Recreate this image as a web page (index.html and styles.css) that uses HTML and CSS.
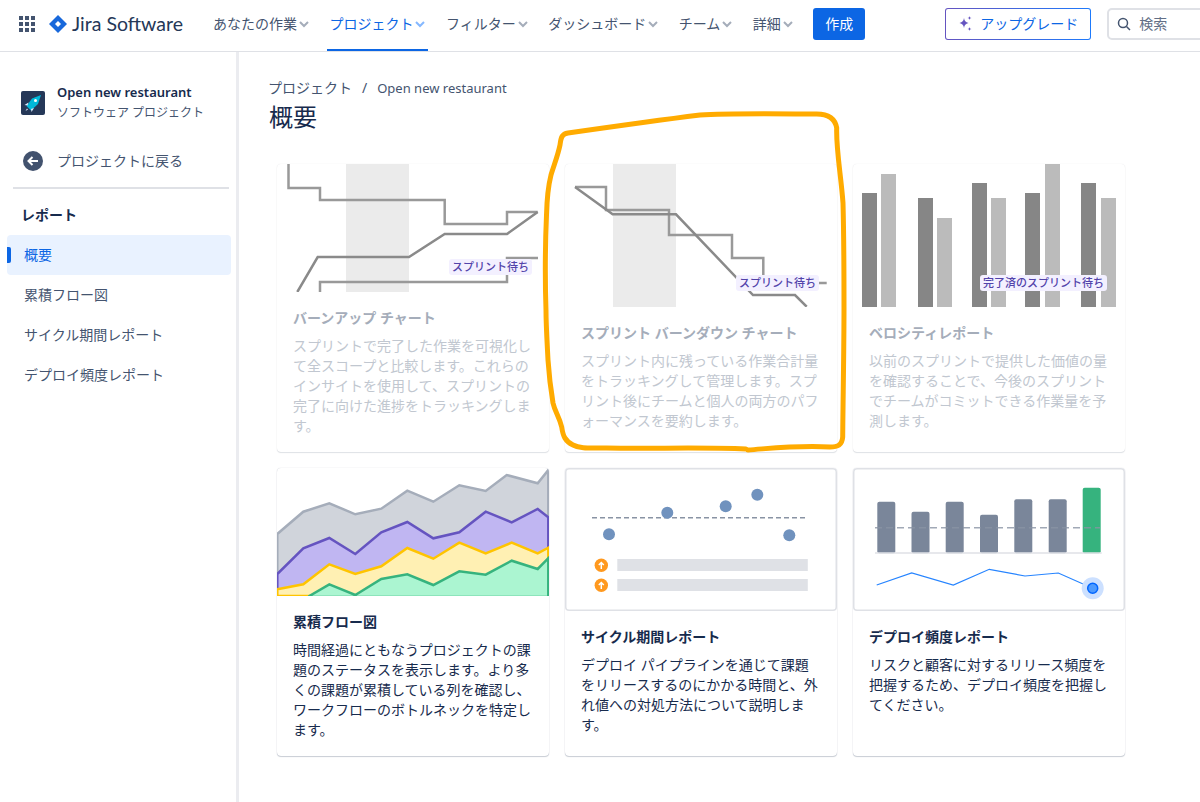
FILE: index.html
```html
<!DOCTYPE html>
<html lang="ja">
<head>
  <meta charset="UTF-8">
  <title>概要 - Jira Software</title>
  <link rel="stylesheet" href="styles.css">
</head>
<body>

  <header class="topbar">
    <svg class="apps" width="16" height="16" viewBox="0 0 16 16">
      <path d="M0 0h4v4H0zM6 0h4v4H6zM12 0h4v4h-4zM0 6h4v4H0zM6 6h4v4H6zM12 6h4v4h-4zM0 12h4v4H0zM6 12h4v4H6zM12 12h4v4h-4z"/>
    </svg>
    <div class="logo">
      <svg width="18" height="18" viewBox="0 0 18 18">
        <path d="M9 0l9 9-9 9-9-9z" fill="#1868db"/>
        <path d="M9 6l3 3-3 3-3-3z" fill="#fff"/>
      </svg>
      <span>Jira Software</span>
    </div>
    <nav class="nav">
      <a class="nav-item">あなたの作業<svg class="chev" viewBox="0 0 12 12"><path d="M2 4l4 4 4-4"/></svg></a>
      <a class="nav-item active">プロジェクト<svg class="chev" viewBox="0 0 12 12"><path d="M2 4l4 4 4-4"/></svg></a>
      <a class="nav-item">フィルター<svg class="chev" viewBox="0 0 12 12"><path d="M2 4l4 4 4-4"/></svg></a>
      <a class="nav-item">ダッシュボード<svg class="chev" viewBox="0 0 12 12"><path d="M2 4l4 4 4-4"/></svg></a>
      <a class="nav-item">チーム<svg class="chev" viewBox="0 0 12 12"><path d="M2 4l4 4 4-4"/></svg></a>
      <a class="nav-item">詳細<svg class="chev" viewBox="0 0 12 12"><path d="M2 4l4 4 4-4"/></svg></a>
    </nav>
    <button class="create">作成</button>
    <button class="upgrade">
      <svg width="16" height="16" viewBox="0 0 16 16" fill="#6554c0">
        <path d="M7 2c.5 3 1.5 4.300 4.500 5-3 .7-4 2-4.500 5-.5-3-1.500-4.300-4.500-5C5.500 6.300 6.500 5 7 2z"/>
        <path d="M12.500 0c.2 1.300.7 1.800 2 2-1.300.2-1.800.7-2 2-.2-1.300-.7-1.800-2-2 1.300-.2 1.800-.7 2-2zM12.500 11c.2 1.300.7 1.800 2 2-1.300.2-1.800.7-2 2-.2-1.300-.7-1.800-2-2 1.300-.2 1.800-.7 2-2z"/>
      </svg>
      アップグレード
    </button>
    <div class="search">
      <svg width="14" height="14" viewBox="0 0 14 14"><circle cx="6" cy="6" r="4.500"/><path d="M9.500 9.500L13 13"/></svg>
      <span>検索</span>
    </div>
  </header>

  <div class="layout">
    <aside class="sidebar">
      <div class="project">
        <svg class="project-icon" width="24" height="24" viewBox="0 0 24 24">
          <rect width="24" height="24" rx="2" fill="#253858"/>
          <path d="M20 4l-3 9-7 6.500-4.500-4.500L11 7.500z" fill="#00b8d9"/>
          <path d="M7.500 11.500L3.500 14l3 .5zM13 17l-2.500 4-.5-3z" fill="#deebff"/>
          <path d="M6 17.500l-1.500 2.500 2.500-1.500z" fill="#deebff"/>
          <circle cx="14.500" cy="9.500" r="1.500" fill="#fff"/>
        </svg>
        <div>
          <div class="project-name">Open new restaurant</div>
          <div class="project-type">ソフトウェア プロジェクト</div>
        </div>
      </div>
      <a class="back">
        <svg width="20" height="20" viewBox="0 0 20 20">
          <circle cx="10" cy="10" r="10" fill="#42526e"/>
          <path d="M15 10H6M9.500 6L5.500 10l4 4" fill="none" stroke="#fff" stroke-width="2"/>
        </svg>
        プロジェクトに戻る
      </a>
      <div class="side-divider"></div>
      <div class="side-heading">レポート</div>
      <a class="side-item selected">概要</a>
      <a class="side-item">累積フロー図</a>
      <a class="side-item">サイクル期間レポート</a>
      <a class="side-item">デプロイ頻度レポート</a>
    </aside>

    <main class="main">
      <div class="breadcrumb">
        <span>プロジェクト</span><span class="sep">/</span><span class="crumb-en">Open new restaurant</span>
      </div>
      <h1 class="title">概要</h1>

      <div class="cards">

        <section class="card faded">
          <div class="pic">
            <svg class="chart" width="272" height="128" viewBox="277 164 272 128" fill="none">
              <rect x="346" y="164" width="63" height="128" fill="#ebebeb"/>
              <path d="M288.500 164V188H320V200H444.700V224H507V212H537.700" stroke="#999" stroke-width="2.500"/>
              <path d="M537.700 212L507 234H444.700L409 257H317.700L297.300 292" stroke="#8a8a8a" stroke-width="2.500"/>
              <path d="M538 258H507V282H320V292" stroke="#999" stroke-width="2.500"/>
            </svg>
            <span class="badge badge-up">スプリント待ち</span>
          </div>
          <div class="body">
            <h2>バーンアップ チャート</h2>
            <p>スプリントで完了した作業を可視化して全スコープと比較します。これらのインサイトを使用して、スプリントの完了に向けた進捗をトラッキングします。</p>
          </div>
        </section>

        <section class="card faded">
          <div class="pic">
            <svg class="chart" width="272" height="143" viewBox="565 164 272 143" fill="none">
              <rect x="613" y="164" width="63" height="143" fill="#ebebeb"/>
              <path d="M575 187H606V210H669V235H732V258H763.300V283H826.700" stroke="#999" stroke-width="2.500"/>
              <path d="M575 187L612.700 214.300H676L753 295H795L806.700 306.700" stroke="#8a8a8a" stroke-width="2.500"/>
            </svg>
            <span class="badge badge-down">スプリント待ち</span>
          </div>
          <div class="body">
            <h2>スプリント バーンダウン チャート</h2>
            <p>スプリント内に残っている作業合計量をトラッキングして管理します。スプリント後にチームと個人の両方のパフォーマンスを要約します。</p>
          </div>
        </section>

        <section class="card faded">
          <div class="pic">
            <svg class="chart" width="272" height="143" viewBox="853 164 272 143">
              <g fill="#868686">
                <rect x="862" y="193" width="15" height="114"/>
                <rect x="918" y="198" width="15" height="109"/>
                <rect x="972" y="183" width="15" height="124"/>
                <rect x="1025" y="193" width="15" height="114"/>
                <rect x="1081" y="183" width="15" height="124"/>
              </g>
              <g fill="#bbb">
                <rect x="881" y="174" width="15" height="133"/>
                <rect x="937" y="218" width="15" height="89"/>
                <rect x="991" y="198" width="15" height="109"/>
                <rect x="1045" y="164" width="15" height="143"/>
                <rect x="1101" y="198" width="15" height="109"/>
              </g>
            </svg>
            <span class="badge badge-velocity">完了済のスプリント待ち</span>
          </div>
          <div class="body">
            <h2>ベロシティレポート</h2>
            <p>以前のスプリントで提供した価値の量を確認することで、今後のスプリントでチームがコミットできる作業量を予測します。</p>
          </div>
        </section>

        <section class="card">
          <div class="pic">
            <svg class="chart" width="272" height="128" viewBox="277 468 272 128" stroke-width="2.500">
              <path d="M277.300 534L303.300 511.700 329.300 503.300 355.300 514.300 381.300 508.700 407.300 490.700 433.300 501.700 459.300 485.300 485.700 491 506.700 475 537.700 483.300 548.300 470V596H277.300Z" fill="#d0d4db" stroke="#a5adba"/>
              <path d="M277.300 574L303.300 548.300 329.300 538 355.300 554 381.300 532.300 407.300 522 433.300 538.300 459.300 532.300 485.700 511.700 511.700 522.300 537.700 509 548.300 517.300V596H277.300Z" fill="#c0b6f2" stroke="#6554c0"/>
              <path d="M277.300 589.300L303.300 584.300 329.300 564.300 355.300 574 381.300 566.300 407.300 548 433.300 558.700 459.300 542.700 485.700 553.300 511.700 542.700 537.700 553.300 548.300 547.700V596H277.300Z" fill="#fff0b3" stroke="#ffc400"/>
              <path d="M309.300 596L329.300 584.300 355.300 595 381.300 579 407.300 574.300 433.300 585 459.300 571.300 485.700 574.700 511.700 560.700 537.700 569 548.300 558.300V597H309.300Z" fill="#abf5d1" stroke="#36b37e"/>
            </svg>
          </div>
          <div class="body">
            <h2>累積フロー図</h2>
            <p>時間経過にともなうプロジェクトの課題のステータスを表示します。より多くの課題が累積している列を確認し、ワークフローのボトルネックを特定します。</p>
          </div>
        </section>

        <section class="card">
          <div class="pic framed">
            <svg class="chart" width="272" height="143" viewBox="565 468 272 143">
              <path d="M592 517.700H808" stroke="#8993a4" stroke-width="1.500" stroke-dasharray="5 3" fill="none"/>
              <g fill="#7092be">
                <circle cx="609" cy="534.300" r="6"/>
                <circle cx="667.300" cy="512.700" r="6"/>
                <circle cx="725.700" cy="506.300" r="6"/>
                <circle cx="757.300" cy="494.700" r="6"/>
                <circle cx="789.300" cy="535.300" r="6"/>
              </g>
              <circle cx="601.300" cy="565.300" r="6.700" fill="#ff991f"/>
              <circle cx="601.300" cy="585.300" r="6.700" fill="#ff991f"/>
              <path d="M601.300 569v-6.500M598.800 565l2.500-2.500 2.500 2.500M601.300 589v-6.500M598.800 585l2.500-2.500 2.500 2.500" stroke="#fff" stroke-width="1.500" fill="none"/>
              <rect x="617.300" y="559" width="190.500" height="12" fill="#dfe1e6"/>
              <rect x="617.300" y="579" width="190.500" height="12" fill="#dfe1e6"/>
            </svg>
          </div>
          <div class="body">
            <h2>サイクル期間レポート</h2>
            <p>デプロイ パイプラインを通じて課題をリリースするのにかかる時間と、外れ値への対処方法について説明します。</p>
          </div>
        </section>

        <section class="card">
          <div class="pic framed">
            <svg class="chart" width="272" height="143" viewBox="853 468 272 143">
              <g fill="#7a869a">
                <rect x="877.300" y="501.700" width="18" height="51.500" rx="2"/>
                <rect x="911.500" y="511.700" width="18" height="41.500" rx="2"/>
                <rect x="945.700" y="501.700" width="18" height="51.500" rx="2"/>
                <rect x="980" y="514.700" width="18" height="38.500" rx="2"/>
                <rect x="1014.300" y="499.300" width="18" height="54" rx="2"/>
                <rect x="1048.700" y="499.300" width="18" height="54" rx="2"/>
              </g>
              <rect x="1082.700" y="487.700" width="18" height="65.500" rx="2" fill="#36b37e"/>
              <path d="M875 553H1101.700" stroke="#dfe1e6" stroke-width="1.500"/>
              <path d="M875 527.700H1100" stroke="#8993a4" stroke-width="1.500" stroke-dasharray="7 4" fill="none" opacity=".8"/>
              <path d="M876.700 585L911.700 573 953.300 585 989.300 569.300 1025 576 1058.300 573 1092.700 588.300" stroke="#2684ff" stroke-width="1.200" fill="none"/>
              <circle cx="1092.700" cy="588.300" r="11" fill="#cce0ff"/>
              <circle cx="1092.700" cy="588.300" r="5" fill="#4c9aff" stroke="#0065ff" stroke-width="1.500"/>
            </svg>
          </div>
          <div class="body">
            <h2>デプロイ頻度レポート</h2>
            <p>リスクと顧客に対するリリース頻度を把握するため、デプロイ頻度を把握してください。</p>
          </div>
        </section>

      </div>
    </main>
  </div>

  <!-- hand drawn highlight on top of the screenshot -->
  <svg class="scribble" width="1200" height="802" viewBox="0 0 1200 802" fill="none">
    <path d="M746 449C700 447 650 449 606.700 448C590 448 580 449 573 445C565 441 563 436 561.700 427C559 416 555 412 553 403C550 385 549 375 548 360C547 340 546 325 546 310C545 280 545 250 546.500 215C547 195 549 183 551 175C554 165 558 155 560 145C561 137 562 134 568 133C610 127 660 120 700 115C730 113 790 114 816.700 114C828 114 835 118 836.700 128C836 150 841 175 843 203C844 240 844 270 844 307C844 350 843 400 842.700 437C842 445 838 447 830 447C800 445 775 448 748 450" stroke="#ffab00" stroke-width="5" stroke-linecap="round" stroke-linejoin="round"/>
  </svg>

</body>
</html>
```

FILE: styles.css
```css
* {
  box-sizing: border-box;
}
body {
  margin: 0;
  height: 802px;
  overflow: hidden;
  position: relative;
  background: #fff;
  color: #44546f;
  font-family: "Noto Sans", "Noto Sans CJK JP", sans-serif;
  font-size: 14px;
  line-height: 20px;
}

/* top bar */
.topbar {
  height: 52px;
  display: flex;
  align-items: center;
  border-bottom: 1px solid #dfe1e6;
  padding: 0 0 3px 19px;
  white-space: nowrap;
}
.apps {
  fill: #44546f;
  flex: none;
}
.logo {
  display: flex;
  align-items: center;
  gap: 5px;
  flex: none;
  margin-left: 14px;
  color: #253858;
  font-family: Lato, sans-serif;
  font-size: 19.500px;
}
.nav {
  display: flex;
  align-self: flex-start;
  flex: none;
  gap: 15.500px;
  margin-left: 28px;
  height: 51px;
}
.nav-item {
  display: flex;
  align-items: center;
  padding: 0 2px 4px;
  position: relative;
}
.nav-item.active {
  color: #0c66e4;
}
.nav-item.active::after {
  content: "";
  position: absolute;
  left: 0;
  right: 0;
  bottom: 0;
  height: 2px;
  background: #0c66e4;
}
.chev {
  width: 12px;
  height: 12px;
  margin-left: 1px;
  fill: none;
  stroke: #a5adba;
  stroke-width: 2;
}
.active .chev {
  stroke: #85b8ff;
}
.create {
  flex: none;
  margin-left: 17.500px;
  width: 52px;
  height: 32px;
  padding: 0;
  border: 0;
  border-radius: 3px;
  background: #0c66e4;
  color: #fff;
  font: inherit;
}
.upgrade {
  display: flex;
  align-items: center;
  gap: 7px;
  flex: none;
  margin-left: 80px;
  width: 146px;
  height: 32px;
  padding: 0 11px;
  border: 1px solid transparent;
  border-radius: 3px;
  background: linear-gradient(#fff, #fff) padding-box, linear-gradient(90deg, #6554c0, #1d7afc) border-box;
  color: #0c66e4;
  font: inherit;
}
.search {
  display: flex;
  align-items: center;
  gap: 8px;
  flex: none;
  margin-left: 16px;
  width: 120px;
  height: 32px;
  padding-left: 8px;
  border: 2px solid #dfe1e6;
  border-radius: 5px;
  color: #626f86;
}
.search svg {
  fill: none;
  stroke: #44546f;
  stroke-width: 1.500;
}

/* sidebar */
.layout {
  display: flex;
  height: 750px;
}
.sidebar {
  width: 239px;
  flex: none;
  padding: 30px 5px 0 7px;
  border-right: 3px solid #ebecf0;
}
.project {
  display: flex;
  align-items: center;
  gap: 12px;
  padding-left: 14px;
}
.project-name {
  color: #172b4d;
  font-size: 13px;
  font-weight: 600;
}
.project-type {
  font-size: 12px;
  margin-top: 1px;
}
.back {
  display: flex;
  align-items: center;
  gap: 14px;
  margin-top: 28px;
  padding-left: 16px;
  height: 20px;
}
.side-divider {
  height: 2px;
  margin: 16px 2px 0 6px;
  background: #dfe1e6;
}
.side-heading {
  margin: 16px 0 10px 14px;
  color: #172b4d;
  font-weight: 700;
}
.side-item {
  display: flex;
  align-items: center;
  height: 40px;
  padding-left: 17px;
  border-radius: 4px;
  position: relative;
}
.side-item.selected {
  background: #e9f2ff;
  color: #0c66e4;
}
.side-item.selected::before {
  content: "";
  position: absolute;
  left: 0;
  top: 12px;
  width: 4px;
  height: 16px;
  border-radius: 0 2px 2px 0;
  background: #0c66e4;
}

/* main */
.main {
  flex: 1;
  padding: 26px 0 0 29px;
}
.breadcrumb {
  display: flex;
  margin-bottom: 3px;
}
.sep {
  margin: 0 10px;
}
.crumb-en {
  font-size: 13px;
}
.title {
  margin: 0 0 31px 1px;
  color: #172b4d;
  font-size: 24px;
  font-weight: 400;
  line-height: 32px;
}
.cards {
  display: grid;
  grid-template-columns: repeat(3, 272px);
  grid-auto-rows: 288px;
  gap: 16px;
  margin-left: 9px;
}
.card {
  border-radius: 4px;
  box-shadow: 0 1px 1px rgba(9, 30, 66, .2), 0 0 1px rgba(9, 30, 66, .25);
  overflow: hidden;
}
.card.faded {
  box-shadow: 0 1px 1px rgba(9, 30, 66, .12), 0 0 1px rgba(9, 30, 66, .12);
}
.pic {
  position: relative;
}
.pic.framed {
  border-radius: 4px;
  box-shadow: inset 0 0 0 1.500px #dfe1e6;
}
.chart {
  display: block;
}
.body {
  padding: 16px 16px 0;
}
.body h2 {
  margin: 0 0 8px;
  color: #172b4d;
  font-size: 14px;
  font-weight: 700;
  line-height: 20px;
}
.body p {
  margin: 0;
  color: #172b4d;
}
.faded .body h2 {
  color: #a5adba;
}
.faded .body p {
  color: #c1c7d0;
}
.badge {
  position: absolute;
  padding: 0 3px;
  height: 16px;
  border-radius: 3px;
  background: #f3f0ff;
  color: #5243aa;
  font-size: 11px;
  font-weight: 500;
  line-height: 16px;
  white-space: nowrap;
}
.badge-up {
  left: 172px;
  top: 95px;
}
.badge-down {
  left: 171px;
  top: 111px;
}
.badge-velocity {
  left: 127px;
  top: 111px;
}

/* orange marker */
.scribble {
  position: absolute;
  left: 0;
  top: 0;
  pointer-events: none;
}
```
